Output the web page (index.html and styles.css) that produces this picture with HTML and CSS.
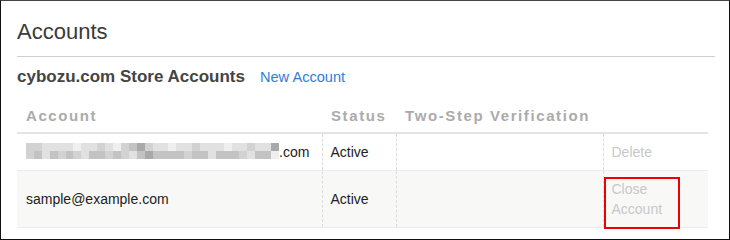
FILE: index.html
```html
<!DOCTYPE html>
<html>
<head>
<meta charset="utf-8">
<link rel="stylesheet" href="styles.css">
</head>
<body>
<div class="frame">
  <h1 class="title">Accounts</h1>
  <div class="subhead">
    <h2 class="subtitle">cybozu.com Store Accounts</h2>
    <a class="new-link" href="#">New Account</a>
  </div>
  <table class="accounts">
    <colgroup>
      <col class="c-account"><col class="c-status"><col class="c-two"><col class="c-action">
    </colgroup>
    <thead>
      <tr>
        <th>Account</th>
        <th>Status</th>
        <th>Two-Step Verification</th>
        <th></th>
      </tr>
    </thead>
    <tbody>
      <tr>
        <td><span class="blur"><i class="b"></i><i class="b"></i><i class="a"></i><i class="a"></i><i class="a"></i><i class="a"></i><i class="w"></i><i class="a"></i><i class="a"></i><i class="b"></i><i class="a"></i><i class="w"></i><i class="b"></i><i class="c"></i><i class="d"></i><i class="b"></i><i class="a"></i><i class="a"></i><i class="w"></i><i class="a"></i><i class="a"></i><i class="b"></i><i class="a"></i><i class="a"></i><i class="a"></i><i class="w"></i><i class="a"></i><i class="a"></i><i class="b"></i><i class="a"></i><i class="a"></i><i class="d"></i><i class="b"></i><i class="c"></i><i class="a"></i><i class="c"></i><i class="b"></i><i class="c"></i><i class="b"></i><i class="a"></i><i class="c"></i><i class="c"></i><i class="b"></i><i class="c"></i><i class="b"></i><i class="a"></i><i class="c"></i><i class="d"></i><i class="c"></i><i class="c"></i><i class="c"></i><i class="c"></i><i class="b"></i><i class="c"></i><i class="c"></i><i class="a"></i><i class="c"></i><i class="c"></i><i class="c"></i><i class="b"></i><i class="a"></i><i class="c"></i><i class="c"></i><i class="w"></i></span>.com</td>
        <td>Active</td>
        <td></td>
        <td class="action">Delete</td>
      </tr>
      <tr class="alt">
        <td>sample@example.com</td>
        <td>Active</td>
        <td></td>
        <td class="action highlight">Close<br>Account<span class="mark"></span></td>
      </tr>
    </tbody>
  </table>
</div>
</body>
</html>
```
FILE: styles.css
```css
html, body {
  margin: 0;
  padding: 0;
  background: #fff;
}

.frame {
  box-sizing: border-box;
  width: 730px;
  height: 240px;
  border: 1px solid #111;
  border-top-color: #444;
  padding: 16px 14px 0 16px;
  font-family: "Liberation Sans", Arial, sans-serif;
  color: #222;
}

.title {
  margin: 0;
  font-size: 22px;
  font-weight: normal;
  line-height: 28px;
  color: #3a3a3a;
  padding-top: 1px;
  padding-bottom: 10px;
  border-bottom: 1px solid #cfcfcf;
}

.subhead {
  display: flex;
  align-items: baseline;
  gap: 15px;
  margin-top: 8px;
}

.subtitle {
  margin: 0;
  font-size: 17px;
  font-weight: bold;
  line-height: 24px;
  color: #444;
}

.new-link {
  font-size: 14.6px;
  color: #2f80d2;
  text-decoration: none;
}

.accounts {
  margin-top: 9px;
  width: 691px;
  table-layout: fixed;
  border-collapse: collapse;
  font-size: 14px;
  line-height: 20px;
}

.c-account { width: 305px; }
.c-status { width: 74px; }
.c-two { width: 207px; }
.c-action { width: 105px; }

.accounts th {
  text-align: left;
  font-size: 15px;
  font-weight: bold;
  letter-spacing: 1.6px;
  color: #ababab;
  padding: 8px 8px 6px 9px;
  border-bottom: 2px solid #e4e4e4;
}

.accounts td {
  padding: 8px 8px 8px 9px;
  vertical-align: middle;
  border-bottom: 1px solid #ececec;
  color: #222;
}

.accounts td + td {
  border-left: 1px dashed #dcdcdc;
  padding-left: 8px;
}

.accounts tr.alt td {
  background: #f8f8f6;
}

.accounts td.action {
  color: #c8c8c8;
}

.highlight {
  position: relative;
}

.mark {
  position: absolute;
  left: 0;
  top: 6px;
  width: 76px;
  height: 52px;
  box-sizing: border-box;
  border: 2px solid #ee0000;
}

.blur {
  display: inline-grid;
  grid-template-columns: repeat(32, 1fr);
  grid-template-rows: 8px 8px;
  width: 253px;
  height: 16px;
  vertical-align: top;
  margin-top: 1px;
}

.blur i { display: block; }
.blur .w { background: #efefef; }
.blur .a { background: #e1e1e1; }
.blur .b { background: #d2d2d2; }
.blur .c { background: #c3c3c3; }
.blur .d { background: #a9a9a9; }
```
